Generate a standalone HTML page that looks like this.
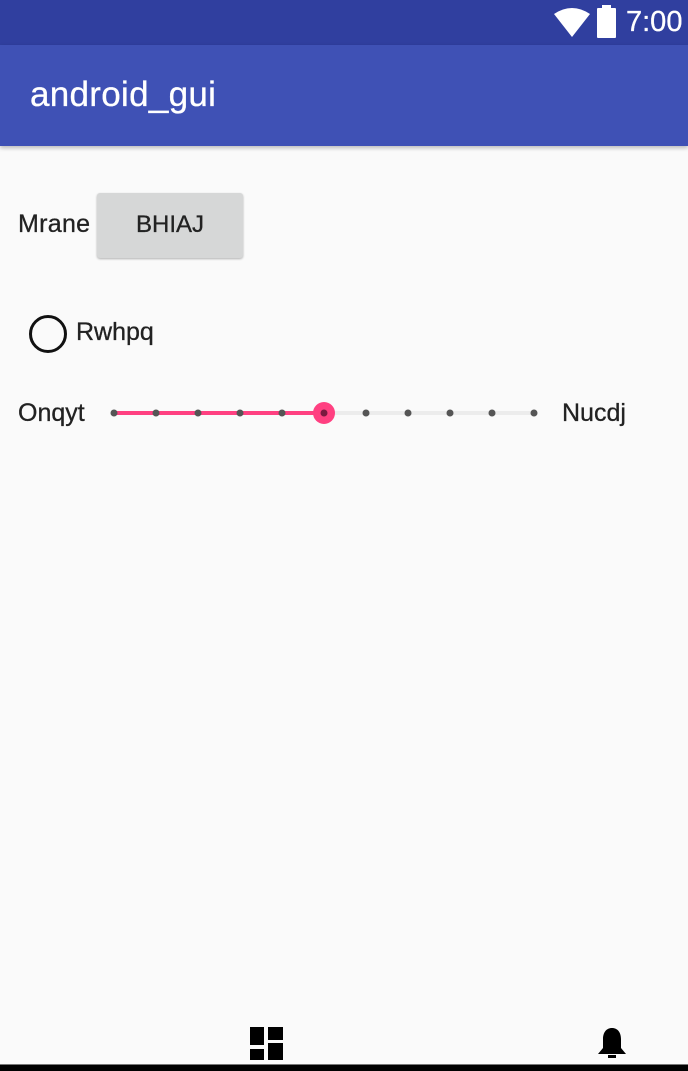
<!DOCTYPE html>
<html><head><style>
body{margin:0;width:688px;height:1070px;background:#fafafa;font-family:"Liberation Sans",Roboto,sans-serif;position:relative;overflow:hidden}
.sb{position:absolute;left:0;top:0;width:688px;height:45px;background:#303f9f}
.ab{position:absolute;left:0;top:45px;width:688px;height:101px;background:#3f51b5;box-shadow:0 2px 4px rgba(0,0,0,.25)}
.t{position:absolute;white-space:nowrap;-webkit-text-stroke:0.3px currentColor}
</style></head><body>
<div class="sb">
<svg style="position:absolute;left:554px;top:8px" width="36" height="30"><path d="M0 6 Q18 -6 36 6 L18 29 Z" fill="#fff"/></svg>
<div style="position:absolute;left:597px;top:8px;width:19px;height:30px;background:#fff;border-radius:1px"></div>
<div style="position:absolute;left:602px;top:5px;width:9px;height:4px;background:#fff"></div>
<div class="t" style="left:626px;top:6px;color:#fff;font-size:29px">7:00</div>
</div>
<div class="ab"><div class="t" style="left:30px;top:30px;color:#fff;font-size:35px;letter-spacing:0.3px">android_gui</div></div>
<div class="t" style="left:18px;top:210px;font-size:25px;color:#222;letter-spacing:0.3px">Mrane</div>
<div style="position:absolute;left:97px;top:193px;width:146px;height:65px;background:#d6d7d7;border-radius:3px;box-shadow:0 1px 2px rgba(0,0,0,.3)"></div>
<div class="t" style="left:97px;top:211px;width:146px;text-align:center;font-size:24px;color:#222">BHIAJ</div>
<div style="position:absolute;left:29px;top:315px;width:32px;height:32px;border:3px solid #111;border-radius:50%"></div>
<div class="t" style="left:76px;top:318px;font-size:25px;color:#222">Rwhpq</div>
<div class="t" style="left:18px;top:399px;font-size:25px;color:#222">Onqyt</div>
<div class="t" style="left:562px;top:399px;font-size:25px;color:#222">Nucdj</div>
<svg style="position:absolute;left:100px;top:400px" width="450" height="28">
<line x1="14" y1="13" x2="434" y2="13" stroke="#ececec" stroke-width="4"/>
<line x1="14" y1="13" x2="224" y2="13" stroke="#ff4081" stroke-width="4"/>
<circle cx="224" cy="13" r="11" fill="#ff4081"/>
<g fill="#555"><circle cx="14" cy="13" r="3.5"/><circle cx="56" cy="13" r="3.5"/><circle cx="98" cy="13" r="3.5"/><circle cx="140" cy="13" r="3.5"/><circle cx="182" cy="13" r="3.5"/><circle cx="224" cy="13" r="3.5" fill="#7a1a40"/><circle cx="266" cy="13" r="3.5"/><circle cx="308" cy="13" r="3.5"/><circle cx="350" cy="13" r="3.5"/><circle cx="392" cy="13" r="3.5"/><circle cx="434" cy="13" r="3.5"/></g>
</svg>
<svg style="position:absolute;left:250px;top:1027px" width="34" height="34"><g fill="#000"><rect x="0" y="0" width="14" height="18"/><rect x="18" y="0" width="15" height="13"/><rect x="0" y="22" width="14" height="11"/><rect x="18" y="16" width="15" height="17"/></g></svg>
<svg style="position:absolute;left:596px;top:1026px" width="32" height="36"><path d="M16 2 C10 2 7 7 7 13 L7 22 L2 28 L30 28 L25 22 L25 13 C25 7 22 2 16 2Z" fill="#000"/><rect x="12" y="29" width="8" height="3" fill="#000"/></svg>
<div style="position:absolute;left:0;top:1064px;width:688px;height:6px;background:#000;border-top:1px solid #777"></div>
</body></html>
